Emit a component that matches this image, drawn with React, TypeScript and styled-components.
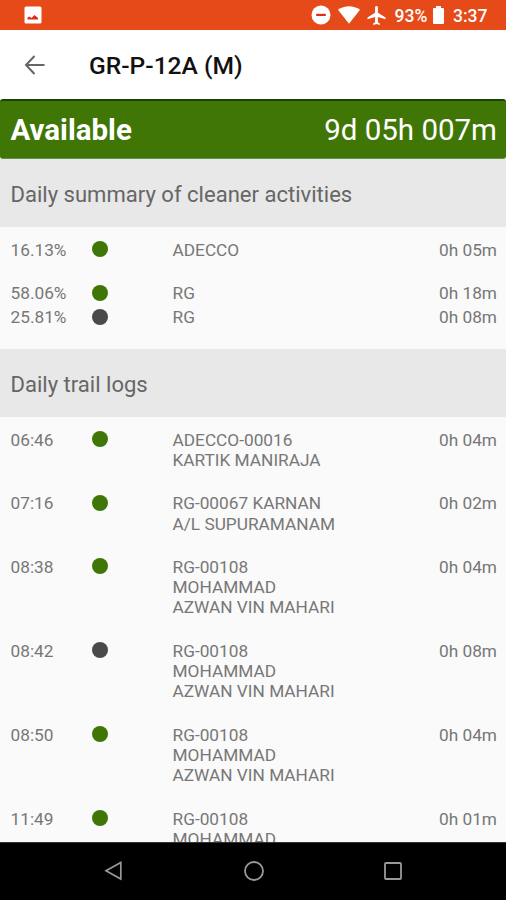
import React from "react";
import styled, { createGlobalStyle } from "styled-components";

const GREEN = "#407605";
const GREY = "#4a4a4a";

const GlobalStyle = createGlobalStyle`
  * { box-sizing: border-box; }
  body { margin: 0; background: #fafafa; font-family: Roboto, "Liberation Sans", sans-serif; }
`;

const Screen = styled.div`
  display: flex;
  flex-direction: column;
  width: 506px;
  height: 900px;
  overflow: hidden;
  background: #fafafa;
`;

const StatusBar = styled.div`
  flex: none;
  display: flex;
  align-items: center;
  justify-content: space-between;
  height: 30px;
  padding: 0 18.5px 0 24px;
  background: #e64a19;
  color: #fff;
`;

const StatusIcons = styled.div`
  display: flex;
  align-items: center;
`;

const StatusText = styled.span<{ $width: number }>`
  width: ${(p) => p.$width}px;
  padding-top: 2px;
  font-size: 17.5px;
  line-height: 28px;
  font-weight: 500;
  white-space: nowrap;
`;

const Icon = styled.svg<{ $gap?: number }>`
  flex: none;
  display: block;
  margin-right: ${(p) => p.$gap ?? 0}px;
`;

const Toolbar = styled.header`
  flex: none;
  display: flex;
  align-items: center;
  gap: 43px;
  height: 69px;
  padding: 0 24px;
  background: #fff;
`;

const Title = styled.h1`
  margin: 3px 0 0;
  font-size: 24.6px;
  line-height: 30px;
  font-weight: 500;
  color: #111;
`;

const Banner = styled.div`
  flex: none;
  display: flex;
  align-items: center;
  justify-content: space-between;
  height: 60px;
  padding: 1px 9px 0 10.5px;
  border-top: 2px solid #19430b;
  border-bottom: 1px solid #67904a;
  border-radius: 3px;
  background: ${GREEN};
  color: #fff;
  font-size: 29.5px;
`;

const State = styled.span`
  font-weight: 700;
`;

const List = styled.main`
  flex: 1;
  min-height: 0;
  overflow: hidden;
  background: #e8e8e8;
`;

const SectionHeader = styled.h2`
  margin: 0;
  height: 68px;
  padding: 2px 10.5px 0;
  background: #e8e8e8;
  color: #666;
  font-size: 22.05px;
  line-height: 67px;
  font-weight: 400;
`;

const Rows = styled.section<{ $height?: number }>`
  height: ${(p) => (p.$height ? `${p.$height}px` : "auto")};
  padding-top: 12.6px;
  background: #fafafa;
`;

const Row = styled.div<{ $after: number }>`
  display: grid;
  grid-template-columns: 81.5px 80.5px 1fr auto;
  align-items: start;
  padding: 0 9px 0 10.5px;
  margin-bottom: ${(p) => p.$after}px;
  color: #777;
  font-size: 17.25px;
  line-height: 20.2px;
`;

const Dot = styled.span<{ $color: string }>`
  width: 16px;
  height: 16px;
  margin-top: 1.4px;
  border-radius: 50%;
  background: ${(p) => p.$color};
`;

const Name = styled.span`
  white-space: pre-line;
`;

const NavBar = styled.nav`
  flex: none;
  display: flex;
  align-items: center;
  justify-content: space-between;
  height: 58px;
  padding: 0 102px 1px 103px;
  border-top: 1px solid #333;
  background: #000;
`;

type Entry = { label: string; color: string; name: string; time: string; after: number };

const summary: Entry[] = [
  { label: "16.13%", color: GREEN, name: "ADECCO", time: "0h 05m", after: 23.4 },
  { label: "58.06%", color: GREEN, name: "RG", time: "0h 18m", after: 3.8 },
  { label: "25.81%", color: GREY, name: "RG", time: "0h 08m", after: 0 },
];

const worker = "RG-00108\nMOHAMMAD\nAZWAN VIN MAHARI";

const logs: Entry[] = [
  { label: "06:46", color: GREEN, name: "ADECCO-00016\nKARTIK MANIRAJA", time: "0h 04m", after: 23.3 },
  { label: "07:16", color: GREEN, name: "RG-00067 KARNAN\nA/L SUPURAMANAM", time: "0h 02m", after: 23.3 },
  { label: "08:38", color: GREEN, name: worker, time: "0h 04m", after: 23.3 },
  { label: "08:42", color: GREY, name: worker, time: "0h 08m", after: 23.3 },
  { label: "08:50", color: GREEN, name: worker, time: "0h 04m", after: 23.3 },
  { label: "11:49", color: GREEN, name: worker, time: "0h 01m", after: 23.3 },
];

const EntryRow = ({ entry }: { entry: Entry }) => (
  <Row $after={entry.after}>
    <span>{entry.label}</span>
    <Dot $color={entry.color} />
    <Name>{entry.name}</Name>
    <span>{entry.time}</span>
  </Row>
);

export default function App() {
  return (
    <>
      <GlobalStyle />
      <Screen>
        <StatusBar>
          <Icon width="18" height="18" viewBox="0 0 18 18">
            <rect x="0.5" y="0.5" width="17" height="17" rx="1.5" fill="#fff" />
            <path d="M3.500 13.500V11.500L5.500 10.500 7.500 12 10.500 9 14 12V13.500Z" fill="#d9301c" />
          </Icon>
          <StatusIcons>
            <Icon $gap={7} width="20" height="20" viewBox="0 0 20 20">
              <circle cx="10" cy="10" r="9.5" fill="#fff" />
              <rect x="5.2" y="8.8" width="9.6" height="2.2" fill="#d9301c" />
            </Icon>
            <Icon $gap={7} width="22" height="18" viewBox="0 0 22 18">
              <path d="M0 3.8C6.2-1.1 15.8-1.1 22 3.8L11 17.8Z" fill="#fff" />
            </Icon>
            <Icon $gap={9} width="19" height="19" viewBox="2 2 19 20">
              <path
                d="M21 16v-2l-8-5V3.500c0-.83-.67-1.500-1.500-1.500S10 2.670 10 3.500V9l-8 5v2l8-2.500V19l-2 1.500V22l3.500-1 3.500 1v-1.500L13 19v-5.500l8 2.500z"
                fill="#fff"
              />
            </Icon>
            <StatusText $width={38}>93%</StatusText>
            <Icon $gap={9.5} width="11" height="18" viewBox="0 0 11 18">
              <path d="M1 2H3V0H8V2H10Q11 2 11 3V17Q11 18 10 18H1Q0 18 0 17V3Q0 2 1 2Z" fill="#fff" />
            </Icon>
            <StatusText $width={34.5}>3:37</StatusText>
          </StatusIcons>
        </StatusBar>

        <Toolbar>
          <Icon width="22" height="22" viewBox="0 0 22 22" fill="none" stroke="#666" strokeWidth="2">
            <path d="M20.500 11H2.500M10.500 2 2 11l8.500 9" />
          </Icon>
          <Title>GR-P-12A (M)</Title>
        </Toolbar>

        <Banner>
          <State>Available</State>
          <span>9d 05h 007m</span>
        </Banner>

        <List>
          <SectionHeader>Daily summary of cleaner activities</SectionHeader>
          <Rows $height={122}>
            {summary.map((entry) => (
              <EntryRow key={entry.label} entry={entry} />
            ))}
          </Rows>
          <SectionHeader>Daily trail logs</SectionHeader>
          <Rows>
            {logs.map((entry) => (
              <EntryRow key={entry.label} entry={entry} />
            ))}
          </Rows>
        </List>

        <NavBar>
          <Icon width="22" height="22" viewBox="0 0 22 22" fill="none" stroke="#999" strokeWidth="1.7">
            <path d="M17.800 2.500V19L3 10.800Z" />
          </Icon>
          <Icon width="22" height="22" viewBox="0 0 22 22" fill="none" stroke="#999" strokeWidth="1.8">
            <circle cx="11" cy="11" r="9" />
          </Icon>
          <Icon width="22" height="22" viewBox="0 0 22 22" fill="none" stroke="#999" strokeWidth="1.8">
            <rect x="3" y="3" width="16" height="16" rx="1" />
          </Icon>
        </NavBar>
      </Screen>
    </>
  );
}
